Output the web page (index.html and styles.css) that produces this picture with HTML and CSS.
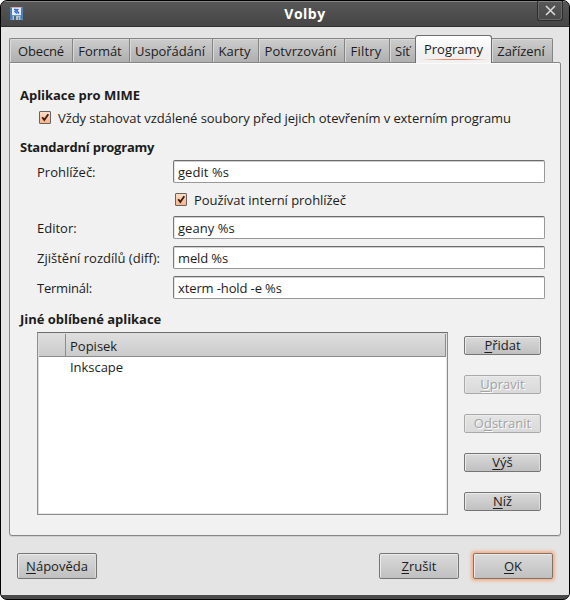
FILE: index.html
```
<!DOCTYPE html>
<html lang="cs">
<head>
<meta charset="utf-8">
<title>Volby</title>
<link rel="stylesheet" href="styles.css">
</head>
<body>
<div class="window">
  <header class="titlebar">
    <svg class="app-icon" width="13" height="13" viewBox="0 0 13 13">
      <rect width="13" height="13" rx="1" fill="#6d9bc8"/>
      <rect x="0" y="1" width="2" height="11" fill="#4f7fae"/>
      <rect x="11" y="1" width="2" height="11" fill="#4f7fae"/>
      <rect x="2" y="0" width="9" height="8" fill="#e9effa"/>
      <rect x="2" y="0" width="9" height="1" fill="#d8a9ae"/>
      <path d="M4 2.500h2l3 4M8.500 2L5 4.500l2 2" fill="none" stroke="#3769e0" stroke-width="1.500"/>
      <rect x="3" y="9" width="7" height="4" fill="#b8c3cd"/>
      <rect x="4" y="9" width="2" height="4" fill="#4c6987"/>
      <rect x="8" y="10" width="1" height="3" fill="#6e8498"/>
    </svg>
    <h1 class="title">Volby</h1>
    <div class="close">
      <svg width="11" height="11" viewBox="0 0 11 11"><path d="M1 1l9 9M10 1l-9 9" stroke="#dcdcdc" stroke-width="1.500" fill="none"/></svg>
    </div>
  </header>

  <main class="content">
    <nav class="tabs">
      <div class="tab w63">Obecné</div>
      <div class="tab w57">Formát</div>
      <div class="tab w83">Uspořádání</div>
      <div class="tab w46">Karty</div>
      <div class="tab w86">Potvrzování</div>
      <div class="tab w45">Filtry</div>
      <div class="tab w26">Síť</div>
      <div class="tab active">Programy</div>
      <div class="tab last">Zařízení</div>
    </nav>

    <section class="panel">
      <h2 class="heading">Aplikace pro MIME</h2>
      <label class="check-row">
        <svg class="box" width="13" height="13" viewBox="0 0 13 13"><use href="#check"/></svg>
        <span class="long">Vždy stahovat vzdálené soubory před jejich otevřením v externím programu</span>
      </label>
      <h2 class="heading standard">Standardní programy</h2>
      <div class="form">
        <div class="field"><span class="label">Prohlížeč:</span><div class="input">gedit %s</div></div>
        <label class="check-row inner">
          <svg class="box" width="13" height="13" viewBox="0 0 13 13"><use href="#check"/></svg>
          <span>Používat interní prohlížeč</span>
        </label>
        <div class="field"><span class="label">Editor:</span><div class="input">geany %s</div></div>
        <div class="field"><span class="label">Zjištění rozdílů (diff):</span><div class="input tight">meld %s</div></div>
        <div class="field"><span class="label terminal">Terminál:</span><div class="input tight">xterm -hold -e %s</div></div>
      </div>
      <h2 class="heading other">Jiné oblíbené aplikace</h2>
      <div class="apps">
        <div class="list">
          <div class="list-head"><div class="col-icon"></div><div class="col-label">Popisek</div></div>
          <div class="list-row">Inkscape</div>
        </div>
        <div class="side">
          <div class="btn"><span><u>P</u>řidat</span></div>
          <div class="btn disabled"><span><u>U</u>pravit</span></div>
          <div class="btn disabled"><span>O<u>d</u>stranit</span></div>
          <div class="btn"><span><u>V</u>ýš</span></div>
          <div class="btn"><span><u>N</u>íž</span></div>
        </div>
      </div>
    </section>

    <footer class="actions">
      <div class="btn big help"><span><u>N</u>ápověda</span></div>
      <div class="btn big"><span><u>Z</u>rušit</span></div>
      <div class="btn big default"><span><u>O</u>K</span></div>
    </footer>
  </main>
</div>

<svg class="defs" width="0" height="0">
  <defs>
    <linearGradient id="peach" x1="0" y1="0" x2="0" y2="1">
      <stop offset="0" stop-color="#fbe0cb"/><stop offset="1" stop-color="#f5b288"/>
    </linearGradient>
    <g id="check">
      <rect x=".5" y=".5" width="11" height="12" rx=".5" fill="url(#peach)" stroke="#6b625d"/>
      <path d="M3.200 6.200L5.300 8.900L9.300 3.200" fill="none" stroke="#3b1a10" stroke-width="1.800"/>
    </g>
  </defs>
</svg>
</body>
</html>
```
FILE: styles.css
```
* { box-sizing: border-box; }

body {
  margin: 0;
  width: 570px;
  height: 600px;
  overflow: hidden;
  background: #fff;
  font: 13px/20px "Open Sans", "Noto Sans", sans-serif;
  color: #1c1c1c;
}

.window {
  height: 600px;
  display: flex;
  flex-direction: column;
  background: #4a4a4a;
  border: 1px solid #000;
  border-radius: 7px;
  overflow: hidden;
}

.titlebar {
  height: 26px;
  flex: none;
  display: grid;
  grid-template-columns: 40px 1fr 40px;
  background: linear-gradient(#575757, #454545);
  border-top: 1px solid #858585;
  border-bottom: 1px solid #303030;
}

.app-icon { margin: 5px 0 0 9px; }

.title {
  margin: 2px 0 0 40px;
  font-size: 14px;
  line-height: 20px;
  letter-spacing: .5px;
  text-align: center;
  color: #fff;
}

.close {
  width: 26px;
  height: 20px;
  margin: -1px 0 0 8px;
  display: flex;
  align-items: center;
  justify-content: center;
  border: 1px solid #2c2c2c;
  border-top: 0;
  border-radius: 0 0 3px 3px;
  box-shadow: inset 1px 0 #686868, inset -1px -1px #686868;
}

.content {
  height: 568px;
  flex: none;
  padding: 8px 8px 0;
  background: #e4e4e4;
}

.tabs {
  height: 27px;
  display: flex;
  align-items: flex-end;
}

.tab {
  height: 24px;
  padding: 2px 1px 0 0;
  border: solid #858585;
  border-width: 1px 0 0 1px;
  background: linear-gradient(#cdcdcd, #afafaf);
  box-shadow: inset 1px 1px #d9d9d9;
  line-height: 20px;
  letter-spacing: -.06px;
  text-align: center;
}

.w63 { width: 63px; padding-right: 0; border-top-left-radius: 2px; letter-spacing: -.14px; }
.w57 { width: 57px; padding-right: 2px; }
.w83 { width: 83px; padding-right: 2px; }
.w46 { width: 46px; padding-right: 2px; letter-spacing: .07px; }
.w86 { width: 86px; padding-right: 2px; letter-spacing: .09px; }
.w45 { width: 45px; padding-right: 2px; letter-spacing: .2px; }
.w26 { width: 26px; padding-right: 0; }

.tab.active {
  position: relative;
  width: 77px;
  height: 28px;
  margin-bottom: -1px;
  padding: 3px 0 0;
  border-width: 1px 1px 0;
  border-color: #6e6e6e;
  border-radius: 3px 3px 0 0;
  background:
    linear-gradient(90deg, rgba(240, 110, 70, 0), #f08a66 35% 65%, rgba(240, 110, 70, 0)) 50% 23px / 68px 1px no-repeat,
    linear-gradient(#fff, #f1f1f1 60%);
  box-shadow: none;
  letter-spacing: 0;
}

.tab.last { width: 61px; padding-right: 2px; border-right-width: 1px; border-left-width: 0; border-top-right-radius: 2px; }

.panel {
  height: 474px;
  padding: 22px 15px 0 10px;
  border: 1px solid #858585;
  border-radius: 0 2px 3px 3px;
  background: #f1f1f1;
  box-shadow: 0 1px #cfcfcf, inset 0 1px #fafafa;
}

.heading {
  margin: 0;
  height: 20px;
  font-size: 13px;
  line-height: 20px;
  letter-spacing: -.03px;
}

.standard { margin-top: 6px; letter-spacing: -.24px; }
.other { margin-top: 10px; }

.check-row {
  height: 26px;
  display: flex;
  align-items: center;
  gap: 6px;
  padding-left: 19px;
}

.check-row .box { margin-bottom: 1px; }
.long { letter-spacing: -.07px; white-space: nowrap; }

.form { padding: 3px 0 0 17px; }

.check-row.inner { height: 33px; padding: 0 0 0 138px; letter-spacing: -.04px; }

.field { height: 23px; display: flex; align-items: center; }
.field + .field { margin-top: 7px; }

.label { width: 136px; padding-top: 1px; }
.terminal { letter-spacing: -.22px; }

.input {
  width: 372px;
  height: 23px;
  padding: 1px 4px 0;
  border: 1px solid #999;
  border-top-color: #6c6c6c;
  border-left-color: #7b7b7b;
  border-radius: 2px;
  background: #fff;
  box-shadow: inset 0 1px #cfcfcf, inset 1px 0 #e6e6e6;
  line-height: 20px;
  letter-spacing: .06px;
}

.input.tight { letter-spacing: -.12px; }

.apps { display: flex; gap: 16px; padding: 3px 0 0 17px; }

.list {
  width: 411px;
  height: 183px;
  padding: 1px;
  border: 1px solid #8d8d8d;
  border-top-color: #6c6c6c;
  background: #fff;
  box-shadow: inset 1px 1px #dedede, inset -1px -1px #e6e6e6;
}

.list-head {
  height: 23px;
  display: flex;
  border-bottom: 1px solid #8b8b8b;
  border-right: 1px solid #8b8b8b;
  background: linear-gradient(#dedede, #cbcbcb);
}

.col-icon { width: 27px; border-right: 1px solid #8b8b8b; }
.col-label { padding: 2px 0 0 4px; }
.list-row { padding-left: 31px; line-height: 20px; letter-spacing: -.04px; }

.side {
  padding-top: 4px;
  display: flex;
  flex-direction: column;
  gap: 20px;
}

.btn {
  width: 77px;
  height: 19px;
  padding-bottom: 1px;
  display: flex;
  align-items: center;
  justify-content: center;
  border: 1px solid #757575;
  border-radius: 2px;
  background: linear-gradient(#dadada, #c0c0c0);
  box-shadow: inset 1px 1px #ebebeb, inset -1px 0 #dcdcdc;
}

.btn span { white-space: nowrap; }

.btn u {
  text-decoration-thickness: 1px;
  text-underline-offset: 2px;
  text-decoration-skip-ink: none;
}

.btn.disabled {
  border-color: #a9a9a9;
  background: linear-gradient(#e5e5e5, #d9d9d9);
  color: #a3a3a3;
  text-shadow: 1px 1px #fff;
}

.actions { display: flex; gap: 14px; padding: 17px 8px 0; }
.btn.big { width: 80px; height: 26px; }
.btn.help { margin-right: auto; }

.btn.default {
  border-color: #837267;
  box-shadow: inset 1px 1px #ebebeb, 0 0 3px 2px rgba(250, 160, 110, .75);
}

.defs { display: block; }
```
